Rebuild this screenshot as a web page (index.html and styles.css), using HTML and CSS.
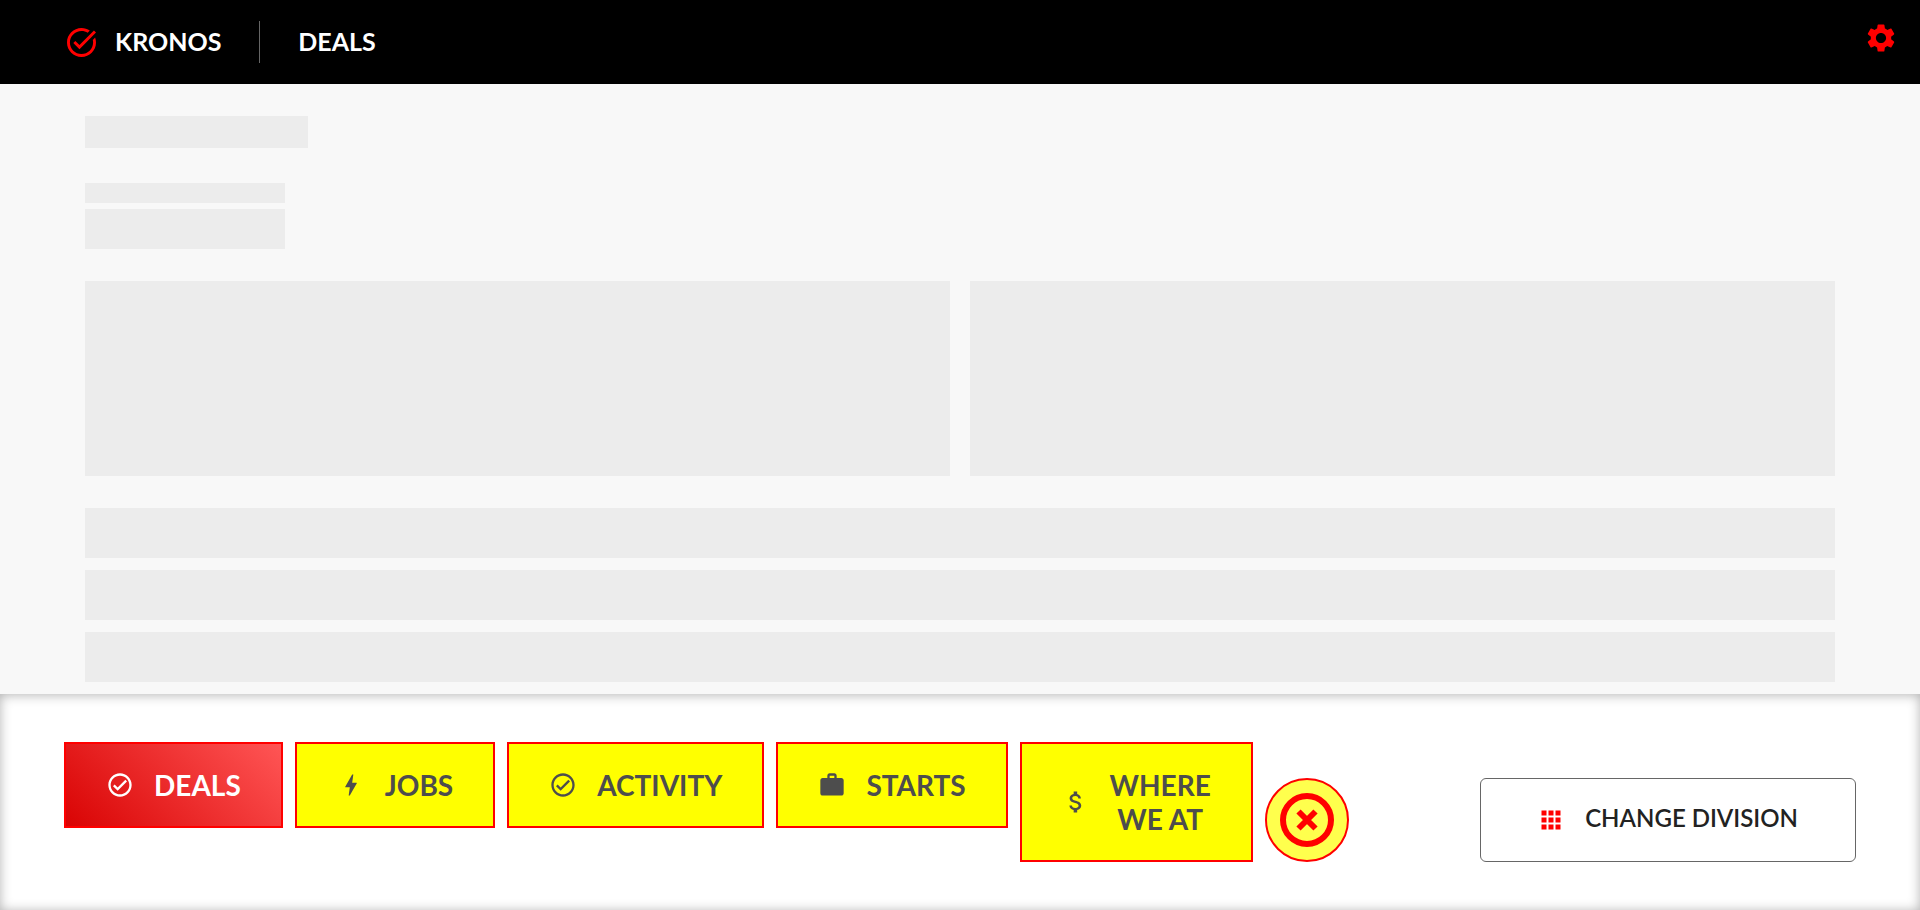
FILE: index.html
```html
<!DOCTYPE html>
<html lang="en">
<head>
<meta charset="utf-8">
<title>Kronos – Deals</title>
<link rel="stylesheet" href="styles.css">
</head>
<body>
<header class="topbar">
  <a class="brand" href="#">
    <svg class="brand-icon" viewBox="2 2 20 20" aria-hidden="true"><path d="M22 5.18 10.59 16.6l-4.24-4.24 1.41-1.41 2.83 2.83 10-10L22 5.18zM19.79 10.22c.13.57.21 1.17.21 1.78 0 4.42-3.58 8-8 8s-8-3.58-8-8 3.58-8 8-8c1.58 0 3.04.46 4.28 1.25l1.44-1.44C16.1 2.67 14.13 2 12 2 6.48 2 2 6.48 2 12s4.48 10 10 10 10-4.48 10-10c0-1.19-.22-2.33-.6-3.39l-1.61 1.61z"/></svg>
    <span class="brand-name">KRONOS</span>
  </a>
  <h1 class="page-title">DEALS</h1>
  <button class="settings" type="button" aria-label="Settings">
    <svg viewBox="0 0 24 24" aria-hidden="true"><path d="M19.14 12.94c.04-.3.06-.61.06-.94 0-.32-.02-.64-.07-.94l2.03-1.58c.18-.14.23-.41.12-.61l-1.92-3.32c-.12-.22-.37-.29-.59-.22l-2.39.96c-.5-.38-1.03-.7-1.62-.94l-.36-2.54c-.04-.24-.24-.41-.48-.41h-3.84c-.24 0-.43.17-.47.41l-.36 2.54c-.59.24-1.13.57-1.62.94l-2.39-.96c-.22-.08-.47 0-.59.22L2.74 8.87c-.12.21-.08.47.12.61l2.03 1.58c-.05.3-.09.63-.09.94s.02.64.07.94l-2.03 1.58c-.18.14-.23.41-.12.61l1.92 3.32c.12.22.37.29.59.22l2.39-.96c.5.38 1.03.7 1.62.94l.36 2.54c.05.24.24.41.48.41h3.84c.24 0 .44-.17.47-.41l.36-2.54c.59-.24 1.13-.56 1.62-.94l2.39.96c.22.08.47 0 .59-.22l1.92-3.32c.12-.22.07-.47-.12-.61l-2.01-1.58zM12 15.6c-1.98 0-3.6-1.62-3.6-3.6s1.62-3.6 3.6-3.6 3.6 1.62 3.6 3.6-1.62 3.6-3.6 3.6z"/></svg>
  </button>
</header>

<main class="content" aria-busy="true">
  <div class="bone bone-title"></div>
  <div class="field">
    <div class="bone bone-label"></div>
    <div class="bone bone-input"></div>
  </div>
  <div class="cards">
    <div class="bone bone-card"></div>
    <div class="bone bone-card"></div>
  </div>
  <div class="rows">
    <div class="bone bone-row"></div>
    <div class="bone bone-row"></div>
    <div class="bone bone-row"></div>
  </div>
</main>

<footer class="dock">
  <nav class="tabs">
    <button class="tab tab-active" type="button">
      <svg viewBox="0 0 24 24" aria-hidden="true"><path d="M12 2C6.480 2 2 6.480 2 12s4.480 10 10 10 10-4.480 10-10S17.520 2 12 2zm0 18c-4.410 0-8-3.590-8-8s3.590-8 8-8 8 3.590 8 8-3.590 8-8 8zm4.590-12.420L10 14.170l-2.590-2.580L6 13l4 4 8-8z"/></svg>
      <span>DEALS</span>
    </button>
    <button class="tab" type="button">
      <svg viewBox="0 0 24 24" aria-hidden="true"><path d="M11 21h-1l1-7H7.500c-.58 0-.57-.32-.38-.66.190-.34.050-.08.070-.12C8.480 10.940 10.420 7.540 13 3h1l-1 7h3.500c.49 0 .56.330.470.510l-.07.150C12.960 17.550 11 21 11 21z"/></svg>
      <span>JOBS</span>
    </button>
    <button class="tab" type="button">
      <svg viewBox="0 0 24 24" aria-hidden="true"><path d="M12 2C6.480 2 2 6.480 2 12s4.480 10 10 10 10-4.480 10-10S17.520 2 12 2zm0 18c-4.410 0-8-3.590-8-8s3.590-8 8-8 8 3.590 8 8-3.590 8-8 8zm4.590-12.420L10 14.170l-2.590-2.580L6 13l4 4 8-8z"/></svg>
      <span>ACTIVITY</span>
    </button>
    <button class="tab" type="button">
      <svg viewBox="0 0 24 24" aria-hidden="true"><path d="M20 6h-4V4c0-1.110-.89-2-2-2h-4c-1.110 0-2 .89-2 2v2H4c-1.110 0-1.990.89-1.990 2L2 19c0 1.110.89 2 2 2h16c1.110 0 2-.89 2-2V8c0-1.110-.89-2-2-2zm-6 0h-4V4h4v2z"/></svg>
      <span>STARTS</span>
    </button>
    <button class="tab" type="button">
      <svg viewBox="0 0 24 24" aria-hidden="true"><path d="M11.800 10.900c-2.270-.59-3-1.200-3-2.150 0-1.090 1.010-1.850 2.700-1.850 1.780 0 2.440.85 2.500 2.100h2.210c-.07-1.720-1.120-3.300-3.210-3.810V3h-3v2.160c-1.940.42-3.500 1.680-3.500 3.610 0 2.310 1.910 3.460 4.700 4.130 2.500.6 3 1.480 3 2.410 0 .69-.49 1.790-2.700 1.790-2.060 0-2.870-.92-2.980-2.100h-2.200c.12 2.190 1.760 3.420 3.680 3.830V21h3v-2.150c1.950-.37 3.500-1.500 3.500-3.550 0-2.840-2.430-3.810-4.700-4.400z"/></svg>
      <span>WHERE<br>WE AT</span>
    </button>
    <button class="close" type="button" aria-label="Close">
      <svg viewBox="0 0 54 54" aria-hidden="true"><circle cx="27" cy="27" r="24"/><path d="M18.500 18.500 35.500 35.500M35.500 18.500 18.500 35.500"/></svg>
    </button>
  </nav>
  <button class="change" type="button">
    <svg viewBox="0 0 20 20" aria-hidden="true"><path d="M.5.5h5v5h-5zM7.500.5h5v5h-5zM14.500.5h5v5h-5zM.5 7.500h5v5h-5zM7.500 7.500h5v5h-5zM14.500 7.500h5v5h-5zM.5 14.500h5v5h-5zM7.500 14.500h5v5h-5zM14.500 14.500h5v5h-5z"/></svg>
    <span class="change-label">CHANGE DIVISION</span>
  </button>
</footer>
</body>
</html>
```
FILE: styles.css
```css
* {
  box-sizing: border-box;
}

body {
  margin: 0;
  min-height: 100vh;
  display: flex;
  flex-direction: column;
  background: #f8f8f8;
  font-family: Lato, "Liberation Sans", sans-serif;
}

button {
  margin: 0;
  font-family: inherit;
  cursor: pointer;
}

svg {
  display: block;
  flex: none;
  fill: currentColor;
}

/* Top bar */
.topbar {
  display: flex;
  align-items: center;
  height: 84px;
  padding: 0 22px 0 67px;
  background: #000;
  color: #fff;
  font-size: 25px;
  font-weight: 700;
  line-height: 40px;
}

.brand {
  display: flex;
  align-items: center;
  gap: 19px;
  color: inherit;
  text-decoration: none;
}

.brand-icon {
  width: 29px;
  height: 29px;
  color: #f00;
}

.brand-name {
  padding-bottom: 2px;
}

.page-title {
  margin: 0 auto 0 38px;
  padding: 0 0 2px 38px;
  border-left: 1px solid #666;
  font-size: inherit;
  font-weight: inherit;
}

.settings {
  padding: 0 0 8px;
  border: 0;
  background: none;
  color: #f00;
}

.settings svg {
  width: 34px;
  height: 34px;
}

/* Loading placeholders */
.content {
  flex: 1;
  padding: 32px 85px 12px;
}

.bone {
  background: #ececec;
}

.bone-title {
  width: 223px;
  height: 32px;
}

.field {
  display: grid;
  gap: 6px;
  width: 200px;
  margin: 35px 0 32px;
}

.bone-label {
  height: 20px;
}

.bone-input {
  height: 40px;
}

.cards {
  display: grid;
  grid-template-columns: 1fr 1fr;
  gap: 20px;
  margin-bottom: 32px;
}

.bone-card {
  height: 195px;
}

.rows {
  display: grid;
  gap: 12px;
}

.bone-row {
  height: 50px;
}

/* Bottom dock */
.dock {
  display: flex;
  justify-content: space-between;
  align-items: flex-end;
  padding: 48px 64px;
  background: #fff;
  box-shadow: inset 0 1px 12px rgba(0, 0, 0, 0.3);
}

.tabs {
  display: flex;
  align-items: flex-start;
  gap: 12px;
}

.tab {
  display: flex;
  align-items: center;
  gap: 20px;
  padding: 24px 40px;
  border: 2px solid #f00;
  background: #ff0;
  color: #4d4d4d;
  font-size: 28px;
  font-weight: 700;
  line-height: 34px;
}

.tab svg {
  width: 28px;
  height: 28px;
}

.tab-active {
  background: linear-gradient(45deg, #d90404, #ff5555);
  color: #fff;
}

.close {
  display: grid;
  place-items: center;
  align-self: flex-end;
  width: 84px;
  height: 84px;
  padding: 0;
  border: 2px solid #f00;
  border-radius: 50%;
  background: #ffff4d;
  color: #f00;
}

.close svg {
  width: 54px;
  height: 54px;
  fill: none;
  stroke: currentColor;
  stroke-width: 6;
}

.change {
  display: flex;
  align-items: center;
  gap: 24px;
  padding: 22px 57px 22px 60px;
  border: 1px solid #666;
  border-radius: 6px;
  background: #fff;
  color: #222;
  font-size: 24px;
  font-weight: 600;
  line-height: 34px;
}

.change svg {
  width: 20px;
  height: 20px;
  color: #f00;
}

.change-label {
  padding-bottom: 4px;
}
```
